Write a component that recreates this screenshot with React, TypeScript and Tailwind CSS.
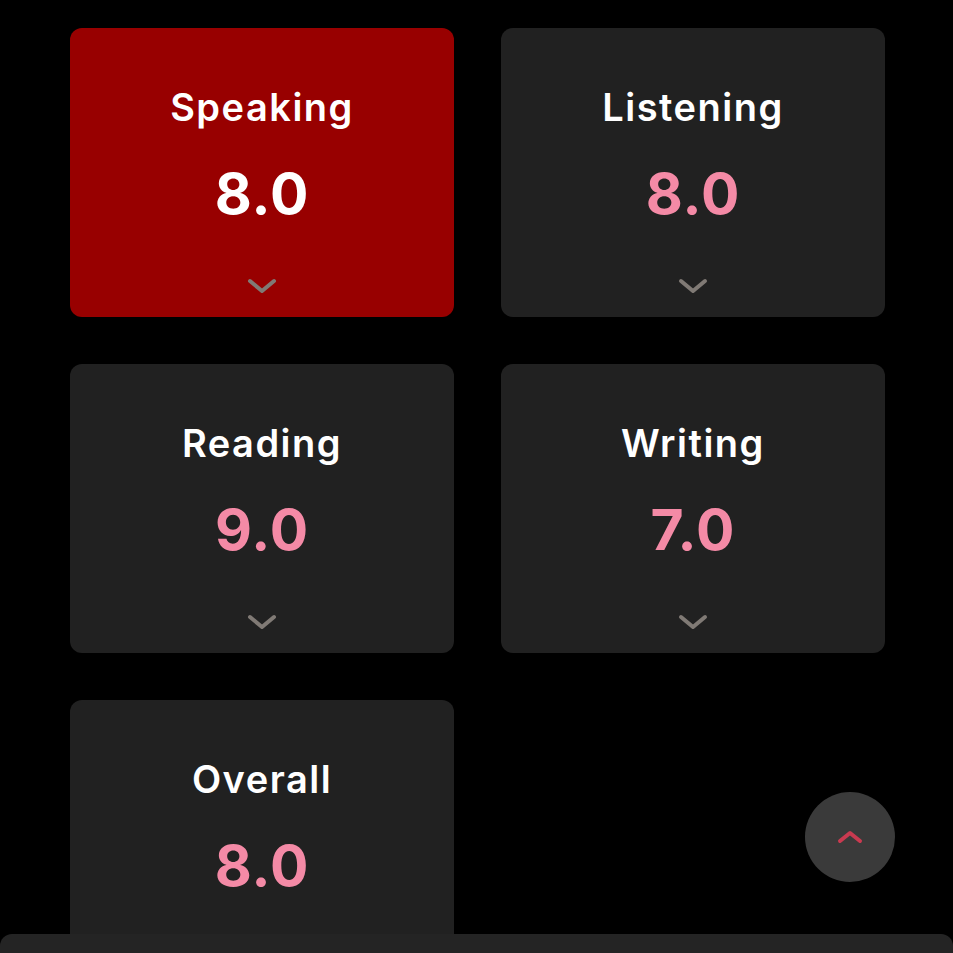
import { useState } from 'react';

type Score = { label: string; value: string };

const scores: Score[] = [
  { label: 'Speaking', value: '8.0' },
  { label: 'Listening', value: '8.0' },
  { label: 'Reading', value: '9.0' },
  { label: 'Writing', value: '7.0' },
  { label: 'Overall', value: '8.0' },
];

function ChevronDown() {
  return (
    <svg width="32" height="18" viewBox="0 0 32 18" fill="none">
      <path d="M4 4 L16 14 L28 4" stroke="#807a75" strokeWidth="4" strokeLinecap="round" strokeLinejoin="round" />
    </svg>
  );
}

function ScoreCard({ score, active, onClick }: { score: Score; active: boolean; onClick: () => void }) {
  return (
    <button
      onClick={onClick}
      className={
        'h-[289px] w-[384px] rounded-[12px] flex flex-col items-center pt-[55px] ' +
        (active ? 'bg-[#980000]' : 'bg-[#212121]')
      }
    >
      <span className="text-[38px] leading-[48px] font-semibold tracking-[1.5px] text-white">{score.label}</span>
      <span
        className={
          'mt-[32px] text-[57px] leading-[62px] font-bold tracking-[1px] ' + (active ? 'text-white' : 'text-[#f48aa6]')
        }
      >
        {score.value}
      </span>
      <span className="mt-[52px] flex">
        <ChevronDown />
      </span>
    </button>
  );
}

export default function App() {
  const [active, setActive] = useState('Speaking');

  return (
    <div className="relative h-[953px] w-[953px] overflow-hidden bg-black font-['Inter','Lato',sans-serif]">
      <div className="grid grid-cols-[384px_384px] gap-[47px] pl-[70px] pt-[28px]">
        {scores.map(s => (
          <ScoreCard key={s.label} score={s} active={active === s.label} onClick={() => setActive(s.label)} />
        ))}
      </div>

      {/* back to top */}
      <button className="absolute left-[805px] top-[792px] h-[90px] w-[90px] rounded-full bg-[#3a3a3a] flex items-center justify-center">
        <svg width="26" height="14" viewBox="0 0 26 14" fill="none">
          <path d="M3 11 L13 3 L23 11" stroke="#c93a50" strokeWidth="4" strokeLinecap="round" strokeLinejoin="round" />
        </svg>
      </button>

      {/* bottom sheet edge */}
      <div className="absolute left-0 right-0 top-[934px] h-[40px] rounded-t-[12px] bg-[#242424]" />
    </div>
  );
}
